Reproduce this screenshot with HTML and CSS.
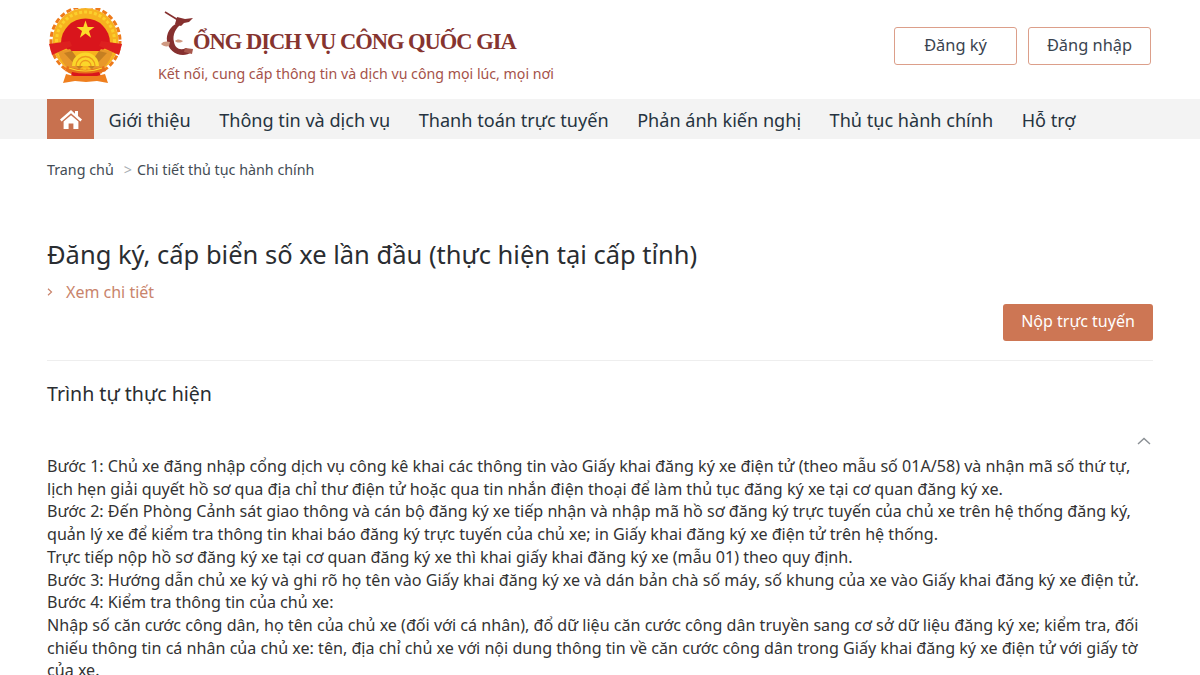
FILE: index.html
```html
<!DOCTYPE html>
<html lang="vi">
<head>
<meta charset="utf-8">
<title>Cổng Dịch vụ công Quốc gia</title>
<link rel="stylesheet" href="styles.css">
</head>
<body>
<header class="header">
  <div class="brand">
    <svg class="emblem" width="76" height="76" viewBox="0 0 76 76" aria-hidden="true">
      <circle cx="37.5" cy="33" r="33" fill="#f7b21f"/>
      <circle cx="37.5" cy="33" r="34.5" fill="none" stroke="#ee7a1a" stroke-width="3" stroke-dasharray="5 2.5"/>
      <circle cx="37.5" cy="33" r="29" fill="none" stroke="#fbd02c" stroke-width="3" stroke-dasharray="3 2"/>
      <path d="M13 35a24.500 24.500 0 1 1 49 0l-8 8H21z" fill="#d9151c"/>
      <path d="M37.500 12.500l2.200 6.500h6.800l-5.500 4.100 2.100 6.600-5.600-4.100-5.600 4.100 2.100-6.600-5.500-4.100h6.800z" fill="#fcdc2a"/>
      <path d="M10 44l12-3 13 17-6 8C20 62 13 54 10 44zM65 44l-12-3-13 17 6 8c9-4 16-12 19-22z" fill="#e8982a"/>
      <path d="M16 45l8-2 11 15-4 3zM59 45l-8-2-11 15 4 3z" fill="#b9771f" opacity=".75"/>
      <path d="M1 36l21-3 2 5-20 9zM74 36l-21-3-2 5 20 9z" fill="#dd1f1f"/>
      <path d="M24 58a13.500 13.500 0 0 1 27 0z" fill="#fbd62a"/>
      <path d="M28 58a9.500 9.500 0 0 1 19 0M32 58a5.500 5.500 0 0 1 11 0" fill="none" stroke="#ed9a1d" stroke-width="1.300"/>
      <path d="M19 58c12 5 25 5 37 0l2 5c-13 5-28 5-41 0z" fill="#e8701a"/>
      <path d="M21 60c10 4 23 4 33 0" fill="none" stroke="#fbd92d" stroke-width="1.200"/>
      <path d="M24 64c9 2 18 2 27 0l2 4-15 3-15-3z" fill="#d9151c"/>
      <path d="M18 66l8 2h23l8-2 3 9-11-2-11 1-11-1-12 2z" fill="#ef7f1e"/>
    </svg>
    <div class="brand-text">
      <div class="site-name">
        <svg class="dragon" width="36" height="46" viewBox="0 0 36 46" aria-hidden="true">
          <path d="M5 2l13 8" fill="none" stroke="#86302f" stroke-width="1.600"/>
          <path d="M17 7l8 2 8-1-4 4-5 1-3 3-6-2z" fill="#86302f"/>
          <path d="M18 13C10 16 6 24 7 31c1 8 8 14 16 14 3 0 6-1 9-3l-6-4c-6 3-11 0-12-6-2-7 2-15 8-18z" fill="#86302f"/>
          <path d="M1 34c2-3 6-3 9-2l-1 4c-3 1-6 0-8-2zM15 31c2-2 5-2 8 0-2 2-6 2-8 0z" fill="#cf9a82"/>
          <path d="M25 38l8 1-1 5-8-2z" fill="#a8574c"/>
        </svg>
        <span class="site-title">ỔNG DỊCH VỤ CÔNG QUỐC GIA</span>
      </div>
      <div class="tagline">Kết nối, cung cấp thông tin và dịch vụ công mọi lúc, mọi nơi</div>
    </div>
  </div>
  <div class="auth">
    <a class="auth-btn">Đăng ký</a>
    <a class="auth-btn">Đăng nhập</a>
  </div>
</header>
<nav class="nav">
  <a class="home">
    <svg width="22" height="19" viewBox="0 0 22 19" aria-hidden="true">
      <path d="M11 0L0 9.600l1.600 1.800L11 3.200l9.400 8.200 1.600-1.800-4-3.500V1h-3v2.800z" fill="#fff"/>
      <path d="M3.600 11.600L11 5.200l7.400 6.400V19h-5v-5.500h-4.800V19h-5z" fill="#fff"/>
    </svg>
  </a>
  <ul class="menu">
    <li>Giới thiệu</li>
    <li>Thông tin và dịch vụ</li>
    <li>Thanh toán trực tuyến</li>
    <li>Phản ánh kiến nghị</li>
    <li>Thủ tục hành chính</li>
    <li>Hỗ trợ</li>
  </ul>
</nav>
<main class="main">
  <div class="crumbs"><span>Trang chủ</span><span class="sep">&gt;</span><span>Chi tiết thủ tục hành chính</span></div>
  <h1 class="title">Đăng ký, cấp biển số xe lần đầu (thực hiện tại cấp tỉnh)</h1>
  <a class="more">
    <svg class="more-arrow" width="6" height="8" viewBox="0 0 6 8" aria-hidden="true"><path d="M1 .8L4.500 4 1 7.200" fill="none" stroke="#c9846c" stroke-width="1.200"/></svg>
    Xem chi tiết
  </a>
  <div class="actions"><a class="submit">Nộp trực tuyến</a></div>
  <hr class="rule">
  <h2 class="section">Trình tự thực hiện</h2>
  <div class="toggle">
    <svg width="14" height="8" viewBox="0 0 14 8" aria-hidden="true"><path d="M1 7l6-5.500L13 7" fill="none" stroke="#8a8f94" stroke-width="1.400"/></svg>
  </div>
  <div class="body-text">
    <p>Bước 1: Chủ xe đăng nhập cổng dịch vụ công kê khai các thông tin vào Giấy khai đăng ký xe điện tử (theo mẫu số 01A/58) và nhận mã số thứ tự, lịch hẹn giải quyết hồ sơ qua địa chỉ thư điện tử hoặc qua tin nhắn điện thoại để làm thủ tục đăng ký xe tại cơ quan đăng ký xe.</p>
    <p>Bước 2: Đến Phòng Cảnh sát giao thông và cán bộ đăng ký xe tiếp nhận và nhập mã hồ sơ đăng ký trực tuyến của chủ xe trên hệ thống đăng ký, quản lý xe để kiểm tra thông tin khai báo đăng ký trực tuyến của chủ xe; in Giấy khai đăng ký xe điện tử trên hệ thống.</p>
    <p>Trực tiếp nộp hồ sơ đăng ký xe tại cơ quan đăng ký xe thì khai giấy khai đăng ký xe (mẫu 01) theo quy định.</p>
    <p>Bước 3: Hướng dẫn chủ xe ký và ghi rõ họ tên vào Giấy khai đăng ký xe và dán bản chà số máy, số khung của xe vào Giấy khai đăng ký xe điện tử.</p>
    <p>Bước 4: Kiểm tra thông tin của chủ xe:</p>
    <p>Nhập số căn cước công dân, họ tên của chủ xe (đối với cá nhân), đổ dữ liệu căn cước công dân truyền sang cơ sở dữ liệu đăng ký xe; kiểm tra, đối chiếu thông tin cá nhân của chủ xe: tên, địa chỉ chủ xe với nội dung thông tin về căn cước công dân trong Giấy khai đăng ký xe điện tử với giấy tờ của xe.</p>
  </div>
</main>
</body>
</html>
```
FILE: styles.css
```css
* { box-sizing: border-box; }
html, body { margin: 0; height: 675px; overflow: hidden; }
body { background: #fff; color: #333; font-family: "Noto Sans", "Open Sans", sans-serif; }
a { color: inherit; text-decoration: none; }

.header { height: 99px; padding: 0 49px 0 48px; display: flex; justify-content: space-between; }
.brand { display: flex; align-items: flex-start; }
.emblem { margin-top: 8px; }
.brand-text { margin-left: 34px; padding-top: 10px; }
.site-name { display: flex; align-items: flex-end; height: 46px; }
.dragon { flex: none; margin-left: 2px; }
.site-title { font-family: "Liberation Serif", serif; font-weight: 700; font-size: 22.5px; letter-spacing: -1px; line-height: 28px; color: #86342f; margin-left: -3px; }
.tagline { margin-top: 8px; font-size: 14.2px; line-height: 20px; color: #a5524a; white-space: nowrap; }
.auth { display: flex; gap: 11px; padding-top: 27px; }
.auth-btn { width: 123px; height: 38px; padding-bottom: 4px; border: 1px solid #dc9f8a; border-radius: 3px; display: flex; align-items: center; justify-content: center; font-size: 16.4px; color: #3a4450; }

.nav { height: 40px; background: #f3f3f3; padding-left: 47px; display: flex; }
.home { width: 47px; background: #c8714f; display: flex; align-items: center; justify-content: center; }
.menu { list-style: none; margin: 2px 0 0 14.5px; padding: 0; display: flex; gap: 28.5px; align-items: center; font-size: 18.1px; color: #263340; white-space: nowrap; }

.main { padding: 0 47px; }
.crumbs { margin-top: 21px; font-size: 14.3px; line-height: 20px; color: #444c54; display: flex; }
.sep { margin: 0 5px 0 10px; color: #a9adb1; }
.title { margin: 57px 0 0; font-size: 25.5px; line-height: 34px; font-weight: 400; color: #2a2d31; }
.more { display: flex; align-items: center; margin-top: 10px; font-size: 16px; line-height: 22px; color: #c9846c; }
.more-arrow { width: 6px; margin-right: 13px; }
.actions { display: flex; justify-content: flex-end; margin-top: 1px; }
.submit { width: 150px; height: 37px; padding-bottom: 3px; background: #cd7654; border-radius: 3px; color: #fff; font-size: 16px; display: flex; align-items: center; justify-content: center; }
.rule { border: 0; border-top: 1px solid #eeeeee; margin: 19px 0 0; }
.section { margin: 20px 0 0; font-size: 19.6px; line-height: 26px; font-weight: 400; color: #2a2d31; }
.toggle { display: flex; justify-content: flex-end; padding-right: 2px; margin-top: 30px; height: 12px; }
.body-text { margin-top: 6px; font-size: 16.1px; line-height: 22.7px; color: #333; }
.body-text p { margin: 0; }
```
